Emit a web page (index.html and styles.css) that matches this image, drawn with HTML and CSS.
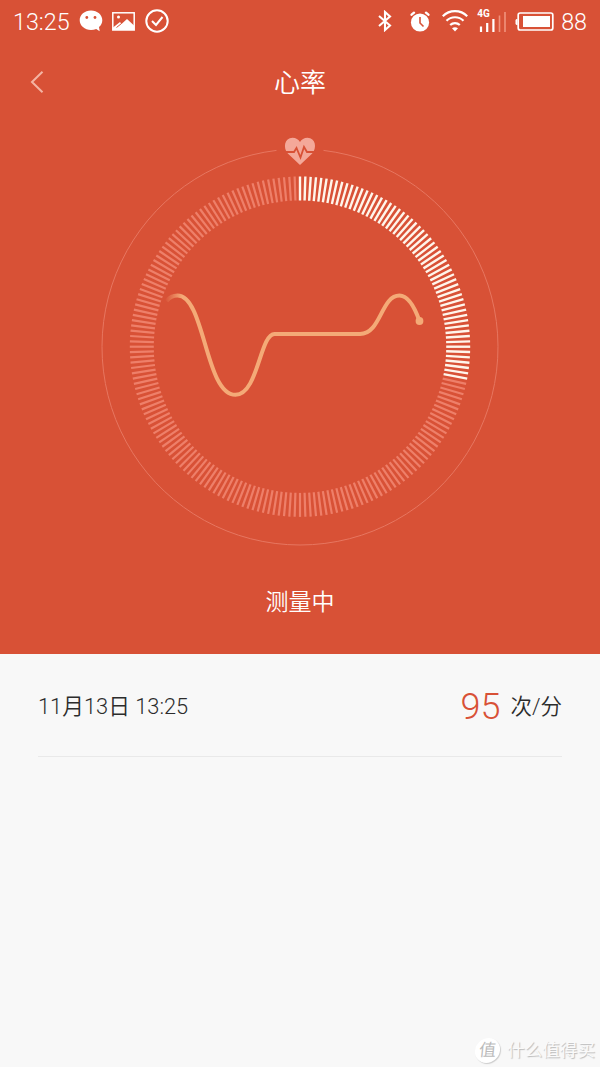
FILE: index.html
```html
<!DOCTYPE html>
<html lang="zh-CN">
<head>
  <meta charset="UTF-8">
  <meta name="viewport" content="width=device-width, initial-scale=1.0">
  <title>心率</title>
  <link rel="stylesheet" href="styles.css">
</head>
<body>

<div class="measure">
  <!-- Status bar -->
  <div class="status-bar">
    <span class="status-time">13:25</span>
    <svg class="icon-chat" width="24" height="22" viewBox="0 0 24 22">
      <path fill="#fff" d="M12 .5C5.600.5.700 4.800.700 10.200c0 5.400 4.900 9.700 11.300 9.700 1.900 0 3.700-.4 5.200-1l3.500 2.300-.7-4.200c2.100-1.700 3.300-4.100 3.300-6.800C23.300 4.800 18.400.5 12 .5z"/>
      <circle cx="7.800" cy="7.500" r="1.400" fill="#d85136"/>
      <circle cx="16" cy="7.500" r="1.400" fill="#d85136"/>
    </svg>
    <svg class="icon-photo" width="23" height="19" viewBox="0 0 23 19">
      <rect x=".8" y=".8" width="21.400" height="17.200" fill="none" stroke="#fff" stroke-width="1.500"/>
      <path fill="#fff" d="M1 18v-2.500l7-5.500 1.500 2L15 7l7 6.500V18z"/>
      <path fill="none" stroke="#d85136" stroke-width="1" d="M4.500 15.500l5-4"/>
      <circle cx="6.500" cy="5" r="1.500" fill="#fff"/>
    </svg>
    <svg class="icon-check" width="24" height="24" viewBox="0 0 24 24">
      <circle cx="12" cy="12" r="10.700" fill="none" stroke="#fff" stroke-width="2"/>
      <path fill="none" stroke="#fff" stroke-width="2" d="M7 12l4 4 6.500-8"/>
    </svg>

    <div class="status-right">
      <svg class="icon-bt" width="14" height="22" viewBox="0 0 14 22">
        <path fill="none" stroke="#fff" stroke-width="2.100" d="M1 6l11 9.500-5 4.500V2l5 4.500L1 16"/>
      </svg>
      <svg class="icon-alarm" width="20" height="21" viewBox="0 0 20 21">
        <circle cx="10" cy="11.500" r="9.100" fill="#fff"/>
        <path fill="none" stroke="#fff" stroke-width="2.400" stroke-linecap="round" d="M1.600 3.700l2.400-2M18.400 3.700l-2.400-2"/>
        <path fill="none" stroke="#d85136" stroke-width="1.600" d="M10 6v6l3.500 3.500"/>
      </svg>
      <svg class="icon-wifi" width="26" height="22" viewBox="0 0 26 22">
        <path fill="none" stroke="#fff" stroke-width="2.200" d="M.800 6.300a17 17 0 0 1 24.400 0M4.500 10.800a12 12 0 0 1 17 0M8.200 15a7 7 0 0 1 9.600 0"/>
        <path fill="#fff" d="M10 18.200q3-1.800 6 0L13 21.500z"/>
      </svg>
      <div class="signal">
        <span class="signal-type">4G</span>
        <svg width="28" height="21" viewBox="0 0 28 21">
          <path stroke="#fff" stroke-width="2.200" d="M3 15.500V21M9.200 12v9M15.400 8v13"/>
          <path stroke="#f0937d" stroke-width="1.600" d="M21.500 4.500V21M27 1v20"/>
        </svg>
      </div>
      <svg class="icon-battery" width="39" height="19" viewBox="0 0 39 19">
        <rect x="3.200" y="1" width="34.600" height="17" rx="2" fill="none" stroke="#fff" stroke-width="1.700"/>
        <rect x="8" y="4" width="27" height="11" fill="#fff"/>
        <path fill="#fff" d="M2.500 7H1.500L.5 8v4l1 1h1z"/>
      </svg>
      <span class="status-level">88</span>
    </div>
  </div>

  <!-- Title bar -->
  <div class="title-bar">
    <svg class="back" width="14" height="24" viewBox="0 0 14 24">
      <path fill="none" stroke="#f4b4a3" stroke-width="2" d="M12.500 1.800L2 12l10.500 10.200"/>
    </svg>
    <h1>心率</h1>
    <span class="title-space"></span>
  </div>

  <!-- Heart rate dial -->
  <svg class="dial" width="400" height="420" viewBox="0 0 400 420">
    <defs>
      <linearGradient id="fade" gradientUnits="userSpaceOnUse" x1="65" y1="0" x2="82" y2="0">
        <stop offset="0" stop-color="#f4aa77" stop-opacity="0"/>
        <stop offset="1" stop-color="#f4aa77"/>
      </linearGradient>
    </defs>
    <path class="orbit" d="M223.500 23.400A198 198 0 1 1 176.500 23.400"/>
    <g id="ticks"></g>
    <path class="heart" d="M200 38L187.800 26.500c-5-5.500-3.400-15.500 4.700-15.700 3.400 0 6 1.700 7.500 4.200 1.500-2.500 4.100-4.200 7.500-4.200 8.100.2 9.700 10.200 4.700 15.700z"/>
    <path class="pulse" d="M185 25h9l2.500-4 4 9.500 3.500-10.500 3 5h8.500"/>
    <path class="wave" stroke="url(#fade)" d="M66.500 174C70 169.500 74 168.500 77.500 168.500C105 168.500 105 267.800 135.500 267.800C158 267.800 160 207 174.500 207H260C281 207 281 168.500 299.500 168.500C308 168.500 314 178.500 319.500 194"/>
    <circle cx="319.500" cy="194" r="3.900" fill="#f4aa77"/>
  </svg>

  <p class="state">测量中</p>
</div>

<!-- Records -->
<div class="records">
  <div class="record">
    <span class="record-date">11月13日 13:25</span>
    <span class="record-value">95</span>
    <span class="record-unit">次/分</span>
  </div>
</div>

<div class="watermark">
  <span class="watermark-logo">值</span>
  <span class="watermark-name">什么值得买</span>
</div>

<script>
  const ticks = document.getElementById('ticks');
  const total = 200;
  const done = 56;

  // Draw the dial ticks clockwise from the top
  for (let i = 0; i < total; i++) {
    const line = document.createElementNS('http://www.w3.org/2000/svg', 'line');
    line.setAttribute('x1', 200);
    line.setAttribute('x2', 200);
    line.setAttribute('y1', 49.5);
    line.setAttribute('y2', 73.5);
    line.setAttribute('transform', `rotate(${i * 360 / total} 200 219.7)`);
    line.setAttribute('class', i <= done ? 'tick on' : 'tick');
    ticks.appendChild(line);
  }
</script>

</body>
</html>
```
FILE: styles.css
```css
* {
  box-sizing: border-box;
}

body {
  margin: 0;
  height: 1067px;
  display: flex;
  flex-direction: column;
  background: #f8f8f8;
  font-family: Roboto, "Noto Sans CJK SC", sans-serif;
  overflow: hidden;
}

svg {
  display: block;
  flex: none;
}

.measure {
  height: 654px;
  flex: none;
  display: flex;
  flex-direction: column;
  align-items: center;
  background: #d85136;
  color: #fff;
}

/* Status bar */
.status-bar {
  width: 100%;
  height: 42px;
  display: flex;
  align-items: center;
  padding: 0 13px;
  font-size: 23.3px;
  font-weight: 300;
}

.status-time {
  width: 66px;
  padding-top: 2px;
}

.icon-photo {
  margin-left: 9px;
}

.icon-check {
  margin-left: 10px;
}

.status-right {
  margin-left: auto;
  display: flex;
  align-items: center;
}

.icon-alarm {
  margin-left: 18px;
}

.icon-wifi {
  margin-left: 12px;
}

.signal {
  display: grid;
  margin-left: 10px;
}

.signal svg,
.signal-type {
  grid-area: 1 / 1;
}

.signal-type {
  font-size: 10px;
  line-height: 10px;
  font-weight: 700;
  margin: -2px 0 0 -1px;
}

.icon-battery {
  margin-left: 9px;
}

.status-level {
  padding-top: 1px;
  margin-left: 7px;
}

/* Title bar */
.title-bar {
  width: 100%;
  height: 80px;
  padding: 0 30px;
  display: flex;
  align-items: center;
  justify-content: space-between;
}

.title-bar h1 {
  margin: 0;
  padding-bottom: 3px;
  font-size: 26px;
  font-weight: 350;
}

.title-space {
  width: 14px;
}

/* Dial */
.dial {
  margin-top: 5px;
}

.orbit {
  fill: none;
  stroke: #e77660;
  stroke-width: 1;
}

.tick {
  stroke: #ee7f69;
  stroke-width: 2.2;
}

.tick.on {
  stroke: #fff5eb;
  stroke-width: 2.4;
}

.heart {
  fill: #f4a899;
}

.pulse {
  fill: none;
  stroke: #d85136;
  stroke-width: 1.8;
}

.wave {
  fill: none;
  stroke-width: 4;
}

.state {
  margin: 39px 0 0;
  font-size: 23px;
  line-height: 34px;
  font-weight: 350;
}

/* Records */
.records {
  flex: 1;
  padding: 0 38px;
}

.record {
  height: 103px;
  display: flex;
  align-items: center;
  border-bottom: 1px solid #e9e9e9;
  font-size: 22px;
  color: #2c2c2c;
}

.record-date {
  padding-bottom: 2px;
  font-size: 21.8px;
  font-weight: 350;
}

.record-value {
  margin-left: auto;
  padding-top: 3px;
  font-size: 36px;
  font-weight: 300;
  color: #d85136;
}

.record-unit {
  margin-left: 10px;
  padding-bottom: 2px;
  font-size: 21.5px;
  font-weight: 350;
}

/* Watermark */
.watermark {
  align-self: flex-end;
  display: flex;
  align-items: center;
  padding: 0 5px 4px 0;
  color: #fafafa;
  text-shadow: 1px 1px 1px #bbb;
}

.watermark-logo {
  width: 25px;
  height: 25px;
  border-radius: 50%;
  background: #fff;
  box-shadow: 1px 1px 1px #ccc;
  font-size: 17px;
  line-height: 24px;
  text-align: center;
  color: #bbb;
  text-shadow: none;
  transform: skewX(-6deg);
}

.watermark-name {
  margin-left: 7px;
  font-size: 17.6px;
  line-height: 26px;
}
```
